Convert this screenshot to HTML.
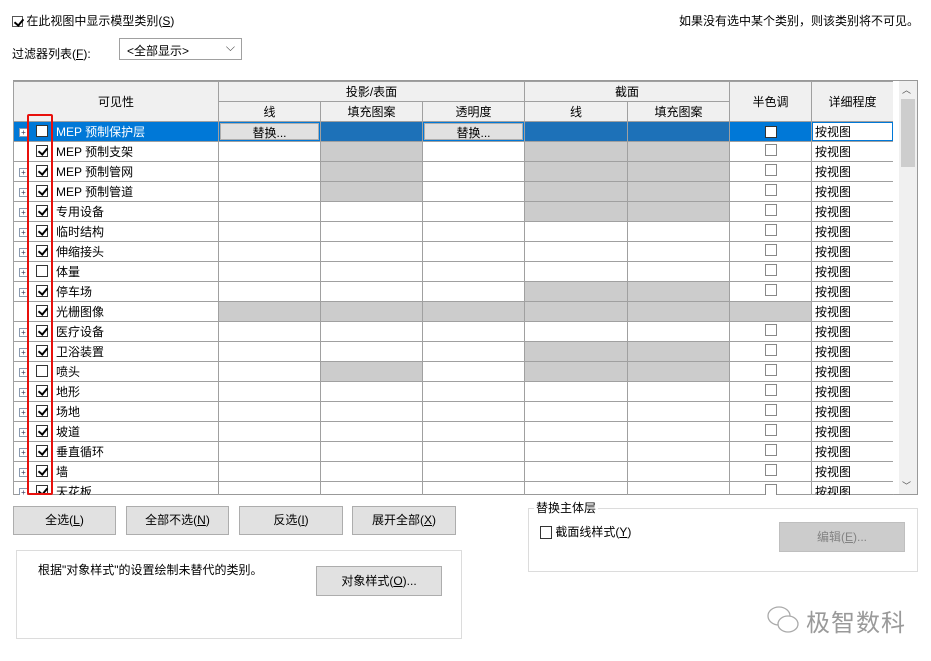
<!DOCTYPE html>
<html><head><meta charset="utf-8"><style>
*{box-sizing:border-box}
body{margin:0;width:931px;height:661px;background:#fff;font-family:"Liberation Sans","Noto Sans CJK SC",sans-serif;font-size:12px;color:#000;position:relative;overflow:hidden}
.a{position:absolute}
.cb{display:inline-block;width:12px;height:12px;border:1px solid #333;background:#fff;position:relative;vertical-align:middle}
.cb.c::after{content:"";position:absolute;left:3px;top:0px;width:4px;height:7px;border:solid #000;border-width:0 2px 2px 0;transform:rotate(40deg)}
.hb{display:inline-block;width:12px;height:12px;border:1px solid #888;background:#fff}
table{border-collapse:collapse;table-layout:fixed;position:absolute;left:13px;top:81px}
td,th{border:1px solid #a0a0a0;height:20px;padding:0;font-weight:normal;white-space:nowrap;overflow:hidden}
th{background:#f0f0f0;text-align:center;font-size:12px}
td{font-size:12px}
.h{background:repeating-conic-gradient(#9a9a9a 0 25%,#fff 0 50%) 0 0/2px 2px}
.sel td{background:#0078d7;color:#fff}
.sel td.h{background:repeating-conic-gradient(#3a6a9a 0 25%,#0078d7 0 50%) 0 0/2px 2px}
.n{position:relative;padding-left:42px}
.n .pl{position:absolute;left:5px;top:6px;width:9px;height:9px;border:1px solid #8a9ab0;background:#fff;font-size:8px;line-height:7px;text-align:center;color:#335}
.n .cb{position:absolute;left:22px;top:3px}
.ct{text-align:center}
.dt{padding-left:3px}
.btn{position:absolute;background:#e1e1e1;border:1px solid #adadad;text-align:center;font-size:12px}
</style></head><body>
<div class="a" style="left:12px;top:12px"><span class="cb c" style="width:11px;height:11px;border-color:#555"></span> 在此视图中显示模型类别(<u>S</u>)</div>
<div class="a" style="left:679px;top:12px">如果没有选中某个类别，则该类别将不可见。</div>
<div class="a" style="left:12px;top:45px">过滤器列表(<u>F</u>):</div>
<div class="a" style="left:119px;top:38px;width:123px;height:22px;border:1px solid #a0a0a0;padding:3px 0 0 7px">&lt;全部显示&gt;<span style="position:absolute;right:6px;top:1px;color:#444">⌵</span></div>
<div class="a" style="left:13px;top:80px;width:905px;height:415px;border:1px solid #999;overflow:hidden">
<div class="a" style="right:0;top:0;width:18px;height:413px;background:#f0f0f0"><div class="a" style="left:2px;top:18px;width:14px;height:68px;background:#cdcdcd"></div><div class="a" style="left:4px;top:2px;font-size:9px;color:#555">︿</div><div class="a" style="left:4px;bottom:2px;font-size:9px;color:#555">﹀</div></div>
</div>
<table>
<colgroup><col style="width:205px"><col style="width:102px"><col style="width:102px"><col style="width:102px"><col style="width:103px"><col style="width:102px"><col style="width:82px"><col style="width:82px"></colgroup>
<tr><th rowspan="2">可见性</th><th colspan="3">投影/表面</th><th colspan="2">截面</th><th rowspan="2">半色调</th><th rowspan="2">详细程度</th></tr>
<tr><th style="height:19px">线</th><th>填充图案</th><th>透明度</th><th>线</th><th>填充图案</th></tr>
<tr class="sel"><td class="n"><span class="pl">+</span><span class="cb"></span>MEP 预制保护层</td><td style="padding:1px"><div style="background:#e1e1e1;color:#000;border:1px solid #adadad;text-align:center;height:17px">替换...</div></td><td class="h"></td><td style="padding:1px"><div style="background:#e1e1e1;color:#000;border:1px solid #adadad;text-align:center;height:17px">替换...</div></td><td class="h"></td><td class="h"></td><td class="ct"><span class="cb"></span></td><td style="padding:1px"><div style="background:#fff;color:#000;height:17px;padding-left:2px">按视图</div></td></tr>
<tr><td class="n"><span class="cb c"></span>MEP 预制支架</td><td></td><td class="h"></td><td></td><td class="h"></td><td class="h"></td><td class="ct"><span class="hb"></span></td><td class="dt">按视图</td></tr>
<tr><td class="n"><span class="pl">+</span><span class="cb c"></span>MEP 预制管网</td><td></td><td class="h"></td><td></td><td class="h"></td><td class="h"></td><td class="ct"><span class="hb"></span></td><td class="dt">按视图</td></tr>
<tr><td class="n"><span class="pl">+</span><span class="cb c"></span>MEP 预制管道</td><td></td><td class="h"></td><td></td><td class="h"></td><td class="h"></td><td class="ct"><span class="hb"></span></td><td class="dt">按视图</td></tr>
<tr><td class="n"><span class="pl">+</span><span class="cb c"></span>专用设备</td><td></td><td></td><td></td><td class="h"></td><td class="h"></td><td class="ct"><span class="hb"></span></td><td class="dt">按视图</td></tr>
<tr><td class="n"><span class="pl">+</span><span class="cb c"></span>临时结构</td><td></td><td></td><td></td><td></td><td></td><td class="ct"><span class="hb"></span></td><td class="dt">按视图</td></tr>
<tr><td class="n"><span class="pl">+</span><span class="cb c"></span>伸缩接头</td><td></td><td></td><td></td><td></td><td></td><td class="ct"><span class="hb"></span></td><td class="dt">按视图</td></tr>
<tr><td class="n"><span class="pl">+</span><span class="cb"></span>体量</td><td></td><td></td><td></td><td></td><td></td><td class="ct"><span class="hb"></span></td><td class="dt">按视图</td></tr>
<tr><td class="n"><span class="pl">+</span><span class="cb c"></span>停车场</td><td></td><td></td><td></td><td class="h"></td><td class="h"></td><td class="ct"><span class="hb"></span></td><td class="dt">按视图</td></tr>
<tr><td class="n"><span class="cb c"></span>光栅图像</td><td class="h"></td><td class="h"></td><td class="h"></td><td class="h"></td><td class="h"></td><td class="h"></td><td class="dt">按视图</td></tr>
<tr><td class="n"><span class="pl">+</span><span class="cb c"></span>医疗设备</td><td></td><td></td><td></td><td></td><td></td><td class="ct"><span class="hb"></span></td><td class="dt">按视图</td></tr>
<tr><td class="n"><span class="pl">+</span><span class="cb c"></span>卫浴装置</td><td></td><td></td><td></td><td class="h"></td><td class="h"></td><td class="ct"><span class="hb"></span></td><td class="dt">按视图</td></tr>
<tr><td class="n"><span class="pl">+</span><span class="cb"></span>喷头</td><td></td><td class="h"></td><td></td><td class="h"></td><td class="h"></td><td class="ct"><span class="hb"></span></td><td class="dt">按视图</td></tr>
<tr><td class="n"><span class="pl">+</span><span class="cb c"></span>地形</td><td></td><td></td><td></td><td></td><td></td><td class="ct"><span class="hb"></span></td><td class="dt">按视图</td></tr>
<tr><td class="n"><span class="pl">+</span><span class="cb c"></span>场地</td><td></td><td></td><td></td><td></td><td></td><td class="ct"><span class="hb"></span></td><td class="dt">按视图</td></tr>
<tr><td class="n"><span class="pl">+</span><span class="cb c"></span>坡道</td><td></td><td></td><td></td><td></td><td></td><td class="ct"><span class="hb"></span></td><td class="dt">按视图</td></tr>
<tr><td class="n"><span class="pl">+</span><span class="cb c"></span>垂直循环</td><td></td><td></td><td></td><td></td><td></td><td class="ct"><span class="hb"></span></td><td class="dt">按视图</td></tr>
<tr><td class="n"><span class="pl">+</span><span class="cb c"></span>墙</td><td></td><td></td><td></td><td></td><td></td><td class="ct"><span class="hb"></span></td><td class="dt">按视图</td></tr>
<tr><td class="n"><span class="pl">+</span><span class="cb c"></span>天花板</td><td></td><td></td><td></td><td></td><td></td><td class="ct"><span class="hb"></span></td><td class="dt">按视图</td></tr>
</table>
<div class="a" style="left:13px;top:495px;width:905px;height:30px;background:#fff"></div>
<div class="a" style="left:893px;top:81px;width:6px;height:413px;background:#fff"></div>
<div class="a" style="left:899px;top:81px;width:18px;height:413px;background:#f0f0f0"><div class="a" style="left:2px;top:18px;width:14px;height:68px;background:#cdcdcd"></div><div class="a" style="left:3px;top:2px;font-size:9px;color:#555">︿</div><div class="a" style="left:3px;bottom:2px;font-size:9px;color:#555">﹀</div></div>
<div class="a" style="left:27px;top:114px;width:26px;height:381px;border:2px solid #e8100c;border-radius:2px"></div>
<div class="btn" style="left:13px;top:506px;width:103px;height:29px;line-height:27px">全选(<u>L</u>)</div>
<div class="btn" style="left:126px;top:506px;width:103px;height:29px;line-height:27px">全部不选(<u>N</u>)</div>
<div class="btn" style="left:239px;top:506px;width:104px;height:29px;line-height:27px">反选(<u>I</u>)</div>
<div class="btn" style="left:352px;top:506px;width:104px;height:29px;line-height:27px">展开全部(<u>X</u>)</div>
<div class="a" style="left:528px;top:508px;width:390px;height:64px;border:1px solid #dcdcdc"></div>
<div class="a" style="left:534px;top:499px;background:#fff;padding:0 2px">替换主体层</div>
<div class="a" style="left:540px;top:523px"><span class="cb" style="width:12px;height:13px"></span> 截面线样式(<u>Y</u>)</div>
<div class="btn" style="left:779px;top:522px;width:126px;height:30px;line-height:28px;background:#ccc;border-color:#bfbfbf;color:#838383">编辑(<u>E</u>)...</div>
<div class="a" style="left:16px;top:550px;width:446px;height:89px;border:1px solid #dcdcdc"></div>
<div class="a" style="left:38px;top:561px">根据"对象样式"的设置绘制未替代的类别。</div>
<div class="btn" style="left:316px;top:566px;width:126px;height:30px;line-height:28px">对象样式(<u>O</u>)...</div>
<svg class="a" style="left:766px;top:603px" width="36" height="34" viewBox="0 0 36 34"><g fill="none" stroke="#aaa" stroke-width="1.3"><ellipse cx="13" cy="13" rx="11" ry="9"/><ellipse cx="22" cy="21" rx="10" ry="8" fill="#fff"/></g></svg>
<div class="a" style="left:806px;top:603px;font-size:24px;color:#9a9a9a;letter-spacing:1px">极智数科</div>
</body></html>
